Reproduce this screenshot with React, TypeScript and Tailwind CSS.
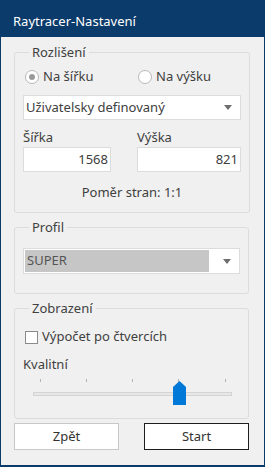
import { useState } from 'react';

function Caret() {
  return (
    <svg width="8" height="5" viewBox="0 0 8 5" className="shrink-0">
      <path d="M0 0 H8 L4 5 Z" fill="#6e6e6e" />
    </svg>
  );
}

function Radio({ label, checked }: { label: string; checked?: boolean }) {
  return (
    <label className="flex items-center gap-[4px] h-[18px]">
      <span className="w-[14px] h-[14px] rounded-full border border-[#b9b9b9] bg-white flex items-center justify-center">
        {checked && <span className="w-[6px] h-[6px] rounded-full bg-[#9a9a9a]" />}
      </span>
      <span>{label}</span>
    </label>
  );
}

function Group({ title, className, children }: { title: string; className?: string; children: React.ReactNode }) {
  return (
    <fieldset className={`border border-[#dcdcdc] rounded-[3px] px-[8px] ${className ?? ''}`}>
      <legend className="ml-[6px] px-[3px] leading-[18px]">{title}</legend>
      {children}
    </fieldset>
  );
}

export default function App() {
  const [ticks] = useState([40, 86, 132, 178, 225]);

  return (
    <div className="w-[265px] h-[467px] flex flex-col bg-[#0b3b6a] px-[1px] pb-[2px] text-[13px] text-[#404040] font-['Noto_Sans',sans-serif]">
      <div className="h-[37px] flex items-center pt-[6px] pl-[12px] text-white text-[13px]">Raytracer-Nastavení</div>

      <div className="flex-1 bg-[#f0f0f0] pl-[13px] pr-[15px] pt-[6px] flex flex-col">
        <Group title="Rozlišení" className="pt-[7px] pb-[11px]">
          <div className="flex">
            <div className="w-[115px] pl-[2px]">
              <Radio label="Na šířku" checked />
            </div>
            <Radio label="Na výšku" />
          </div>

          <div className="mt-[9px] h-[25px] bg-white border border-[#dcdcdc] flex items-center justify-between pl-[2px] pr-[8px]">
            <span>Uživatelsky definovaný</span>
            <Caret />
          </div>

          <div className="mt-[8px] grid grid-cols-[88px_104px] gap-x-[26px]">
            <span className="leading-[18px]">Šířka</span>
            <span className="leading-[18px]">Výška</span>
            <div className="mt-[1px] h-[25px] bg-white border border-[#dcdcdc] flex items-center justify-end pr-[2px]">1568</div>
            <div className="mt-[1px] h-[25px] bg-white border border-[#dcdcdc] flex items-center justify-end pr-[2px]">821</div>
          </div>

          <div className="mt-[11px] leading-[18px] text-center">Poměr stran: 1:1</div>
        </Group>

        <Group title="Profil" className="mt-[5px] pt-[12px] pb-[19px]">
          <div className="h-[26px] bg-white border border-[#dcdcdc] flex items-center p-[1px] pr-[8px]">
            <div className="h-full flex-1 bg-[#c6c6c6] flex items-center pl-[2px] text-[#555] mr-[14px]">SUPER</div>
            <Caret />
          </div>
        </Group>

        <Group title="Zobrazení" className="mt-[5px] pt-[11px] pb-[9px]">
          <label className="flex items-center gap-[4px] h-[18px] pl-[2px]">
            <span className="w-[13px] h-[13px] border border-[#8a8a8a] bg-white" />
            <span>Výpočet po čtvercích</span>
          </label>

          <div className="mt-[9px] leading-[18px]">Kvalitní</div>

          <div className="relative h-[36px] mx-[-8px]">
            {ticks.map((x) => (
              <span key={x} className="absolute top-[6px] w-px h-[3px] bg-[#b4b4b4]" style={{ left: x - 15 }} />
            ))}
            <div className="absolute left-[18px] right-[16px] top-[19px] h-[4px] bg-[#e7e7e7] border border-[#d4d4d4]" />
            <svg width="13" height="24" viewBox="0 0 13 24" className="absolute left-[158px] top-[8px]">
              <path d="M6.5 0 L13 6 V24 H0 V6 Z" fill="#0078d7" />
            </svg>
          </div>
        </Group>

        <div className="mt-[4px] flex justify-between">
          <button className="w-[105px] h-[27px] bg-white border border-[#c8c8c8] text-[#333]">Zpět</button>
          <button className="w-[105px] h-[27px] bg-white border border-[#1e1e1e] text-[#333]">Start</button>
        </div>
      </div>
    </div>
  );
}
